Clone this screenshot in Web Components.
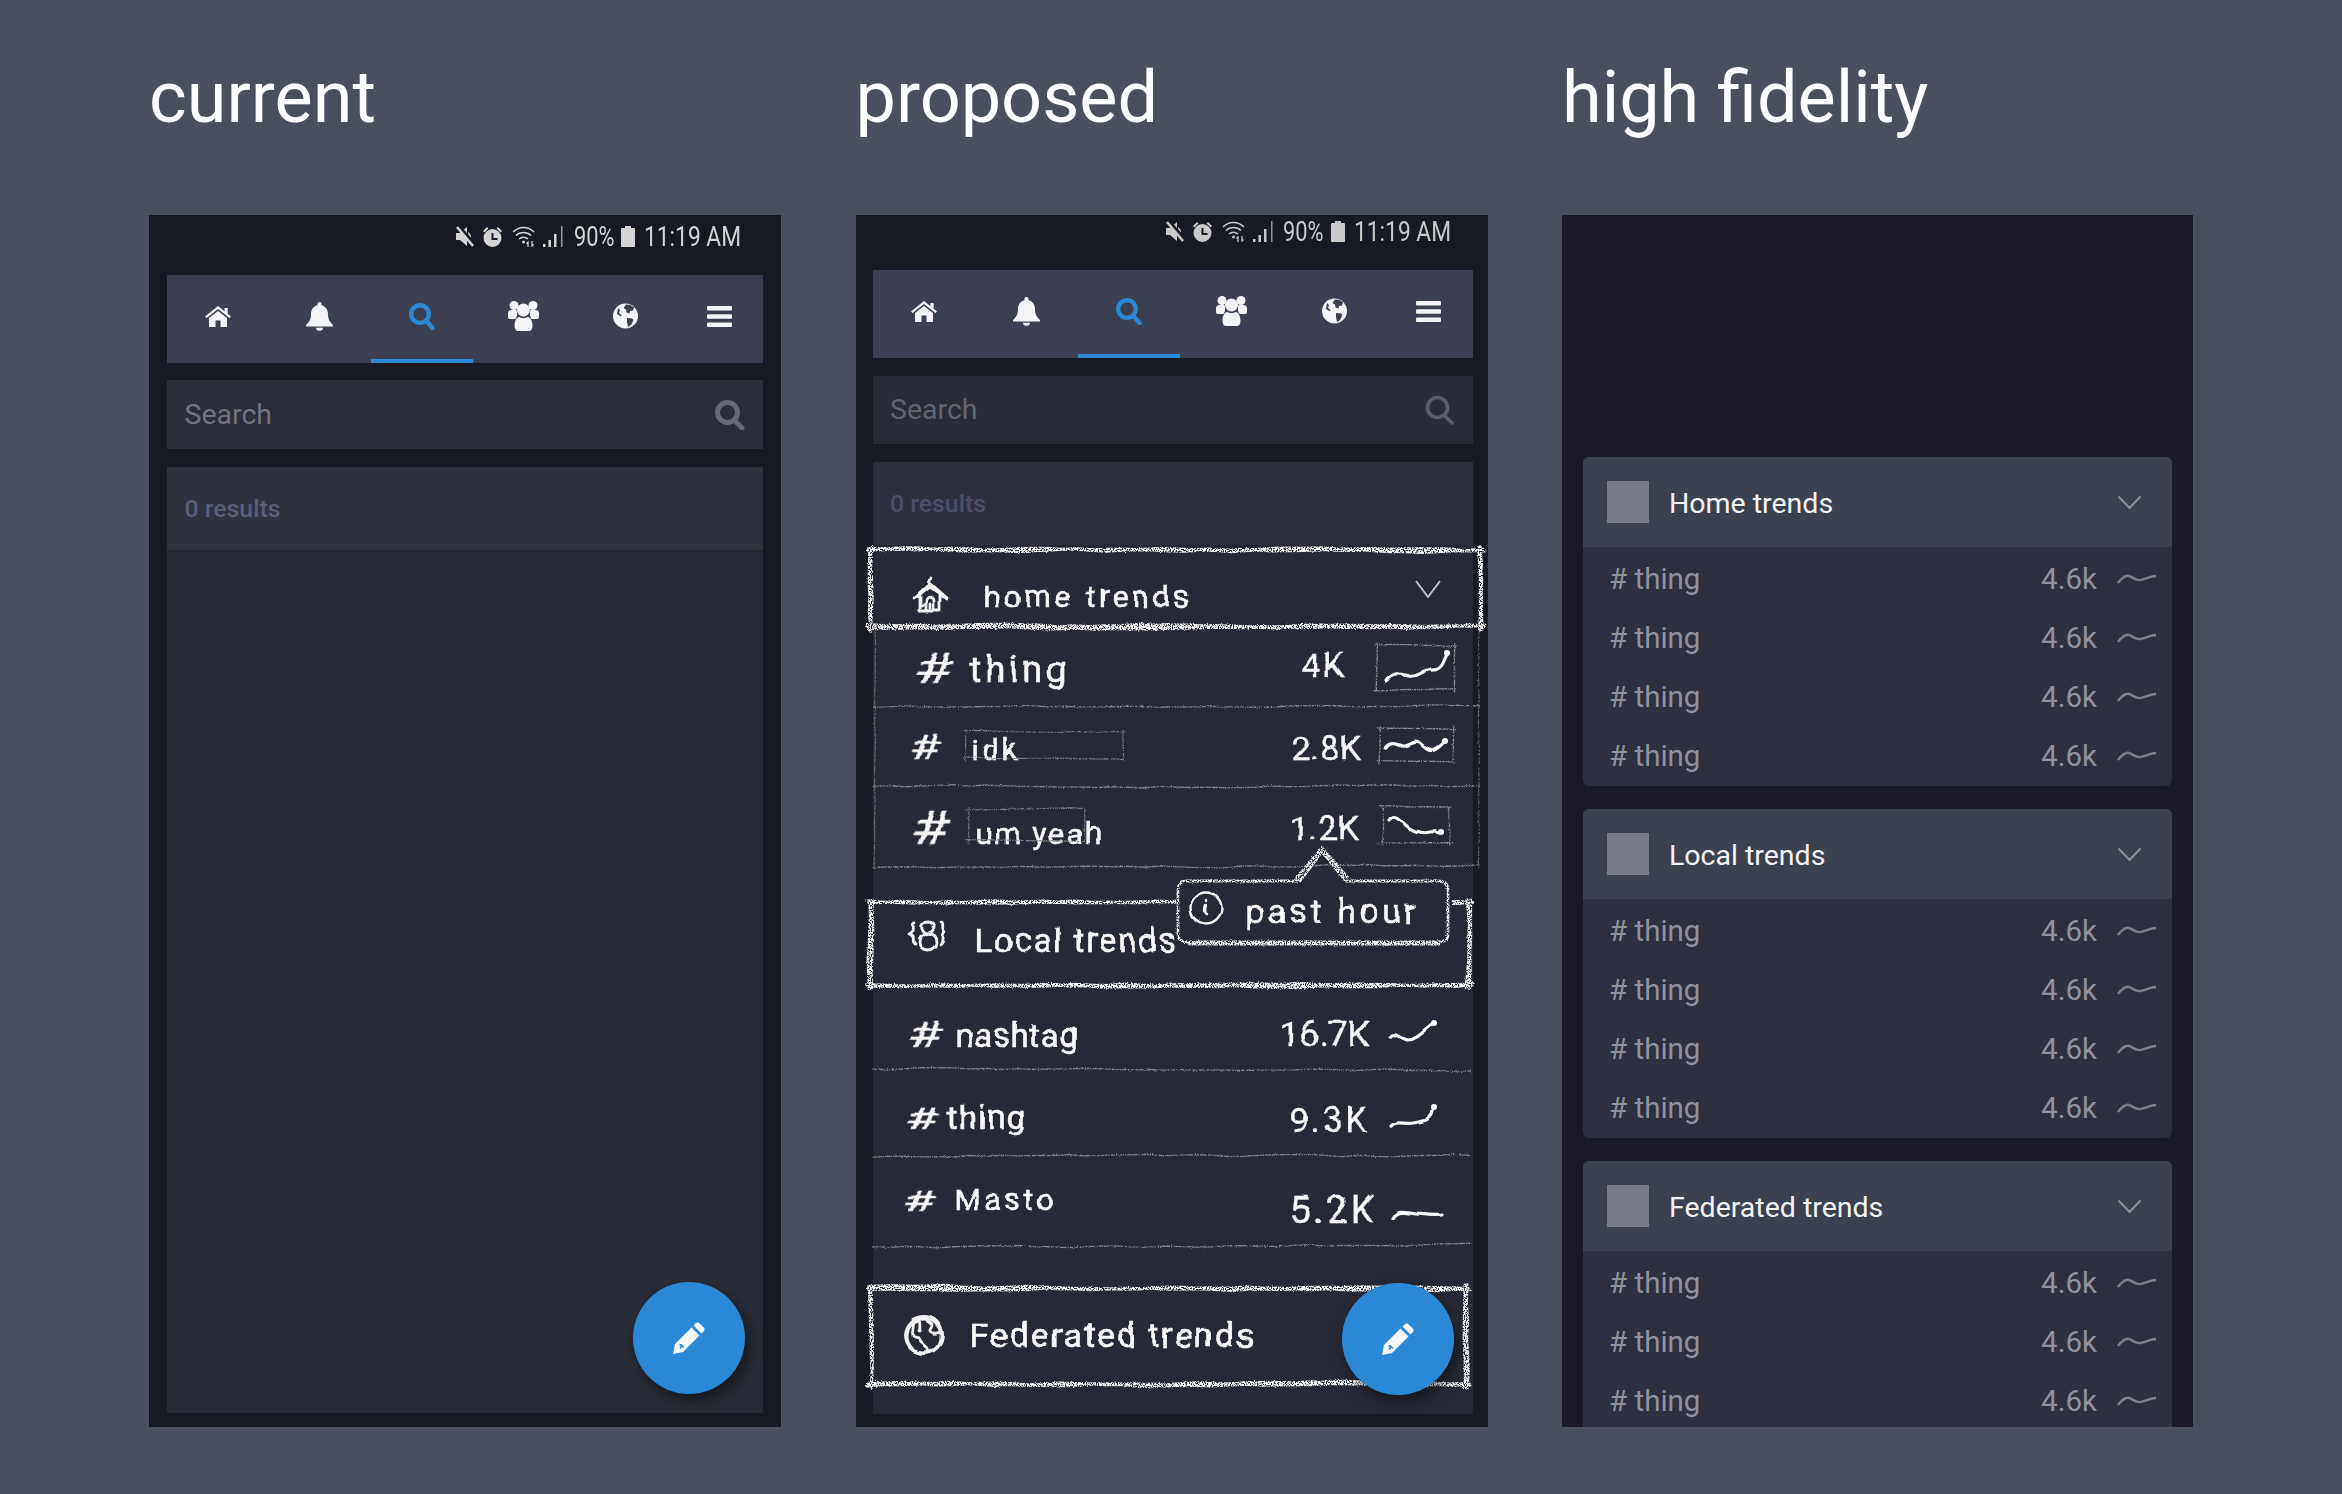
<!DOCTYPE html>
<html lang="en">
<head>
<meta charset="utf-8">
<title>Trends mockup</title>
<style>
html,body{margin:0;padding:0;background:#4a4f5e;}
html{height:1494px;overflow:hidden;}
body{width:2342px;height:1494px;overflow:hidden;font-family:Roboto,"Liberation Sans",sans-serif;}
.board{display:grid;grid-template-columns:632px 632px 631px;column-gap:74.5px;padding-left:149px;}
</style>
</head>
<body>
<div class="board">
  <mock-column heading="current">
    <app-phone style="--bg:#171a22;--pl:18px;--pr:18px;--sh:60px;--pb:14px;--sg:17px">
      <status-bar style="--stp:7px;--ibg:#171a22"></status-bar>
      <nav-bar></nav-bar>
      <search-box style="--box:#2b2d39;--txt:#72757f;--ico:#666a75;--sw:5;--h:69px"></search-box>
      <result-panel style="--head:#2f313d;--body:#292b36;--count:#5a5e79;--hh:85px"></result-panel>
      <fab-button style="--fr:36px;--fb:33px"></fab-button>
    </app-phone>
  </mock-column>

  <mock-column heading="proposed">
    <app-phone style="--bg:#181a24;--pl:17px;--pr:15px;--sh:55px;--pb:13px;--sg:18px">
      <status-bar style="--st:#c9c9c9;--stp:2px;--ibg:#181a24"></status-bar>
      <nav-bar></nav-bar>
      <search-box style="--box:#292b37;--txt:#62656f;--ico:#5a5d68;--sw:3.6;--h:68px"></search-box>
      <result-panel style="--head:#2d2f3d;--body:#272a36;--count:#4a4e69;--hh:85px">
        <sketch-head label="home trends" icon="home" chevron w="615" h="83" tx="115" tw="209" ty="8" fs="30" ix="44" seed="11"></sketch-head>
        <sketch-row h="78" hx="46" hw="38" hs="42" tx="101" vx="433" sx="507" tag="thing" tw="101" ts="36" val="4K" vw="45" vs="33" spark="0" sides rule seed="21" dy="0" tdy="1" sdy="-3" vdy="-3"></sketch-row>
        <sketch-row h="79" hx="41" hw="30" hs="35" tx="103" vx="423" sx="509" tag="idk" tw="48" ts="30" val="2.8K" vw="70" vs="34" spark="1" sides rule seed="31" dy="0" tdy="2" sdy="-3" vdy="0" faint="97,24,156,26"></sketch-row>
        <sketch-row h="81" hx="43" hw="38" hs="46" tx="107" vx="421" sx="512" tag="um yeah" tw="128" ts="30" val="1.2K" vw="70" vs="34" spark="2" sides rule seed="41" dy="0" tdy="6" sdy="-3" vdy="0" faint="99,23,115,30"></sketch-row>
        <sketch-head label="Local trends" icon="local" w="603" h="88" tx="106" tw="203" ty="-3" fs="33" ix="38" seed="51" mt="32" tooltip></sketch-head>
        <sketch-row h="82" hx="39" hw="34" hs="36" tx="87" vx="411" sx="521" tag="nashtag" tw="123" ts="33" val="16.7K" vw="90" vs="35" spark="3" rule seed="61" dy="6" tdy="7" sdy="2" vdy="6" ruletone="1"></sketch-row>
        <sketch-row h="87" hx="37" hw="32" hs="32" tx="78" vx="421" sx="522" tag="thing" tw="80" ts="34" val="9.3K" vw="80" vs="35" spark="4" rule seed="71" dy="4" tdy="3" sdy="2" vdy="7" ruletone="1"></sketch-row>
        <sketch-row h="91" hx="34" hw="32" hs="30" tx="86" vx="421" sx="524" tag="Masto" tw="103" ts="30" val="5.2K" vw="88" vs="38" spark="5" rule seed="81" dy="-2" tdy="-3" sdy="11" vdy="7" ruletone="1"></sketch-row>
        <sketch-head label="Federated trends" icon="globe" w="600" h="102" tx="101" tw="286" ty="-1" fs="34" ix="35" seed="91" mt="37"></sketch-head>
      </result-panel>
      <fab-button style="--fr:34px;--fb:32px"></fab-button>
    </app-phone>
  </mock-column>

  <mock-column heading="high fidelity">
    <app-phone style="--bg:#1a1b26;--pl:21px;--pr:21px;--sh:242px;--pb:0px">
      <trend-card>Home trends
        <trend-row slot="rows"></trend-row><trend-row slot="rows"></trend-row><trend-row slot="rows"></trend-row><trend-row slot="rows"></trend-row>
      </trend-card>
      <trend-card>Local trends
        <trend-row slot="rows"></trend-row><trend-row slot="rows"></trend-row><trend-row slot="rows"></trend-row><trend-row slot="rows"></trend-row>
      </trend-card>
      <trend-card>Federated trends
        <trend-row slot="rows"></trend-row><trend-row slot="rows"></trend-row><trend-row slot="rows"></trend-row>
      </trend-card>
    </app-phone>
  </mock-column>
</div>

<script>
const HAND_FONT = 'Roboto,"Liberation Sans",sans-serif';
const DEFS = `<svg width="0" height="0" style="position:absolute" aria-hidden="true"><defs>
<filter id="ink" x="-10%" y="-25%" width="120%" height="150%" color-interpolation-filters="sRGB">
  <feTurbulence type="fractalNoise" baseFrequency="0.045" numOctaves="2" seed="7" result="n"/>
  <feDisplacementMap in="SourceGraphic" in2="n" scale="5" xChannelSelector="R" yChannelSelector="G"/>
  <feGaussianBlur stdDeviation="0.35"/>
</filter>
<filter id="chalk" filterUnits="userSpaceOnUse" x="-40" y="-90" width="760" height="320" color-interpolation-filters="sRGB">
  <feTurbulence type="fractalNoise" baseFrequency="0.85" numOctaves="2" seed="3" result="n"/>
  <feDisplacementMap in="SourceGraphic" in2="n" scale="2.4" xChannelSelector="R" yChannelSelector="G" result="d"/>
  <feColorMatrix in="n" type="matrix" values="0 0 0 0 1  0 0 0 0 1  0 0 0 0 1  7 0 0 0 -2.5" result="g"/>
  <feComposite in="d" in2="g" operator="in"/>
</filter>
</defs></svg>`;

function rng(seed){let s=seed*7919%2147483647;return()=>(s=s*16807%2147483647)/2147483647;}
function rough(r,x1,y1,x2,y2,j,step){
  step=step||16;
  const dx=x2-x1,dy=y2-y1,L=Math.hypot(dx,dy)||1,n=Math.max(2,Math.round(L/step));
  const nx=-dy/L,ny=dx/L;let off=(r()-.5)*j,d='M'+(x1+nx*off).toFixed(1)+' '+(y1+ny*off).toFixed(1);
  for(let i=1;i<=n;i++){
    off=off*.6+(r()-.5)*j;
    const t=i/n;d+=' L'+(x1+dx*t+nx*off).toFixed(1)+' '+(y1+dy*t+ny*off).toFixed(1);
  }
  return d;
}
function roughBox(r,x,y,w,h,p,j){
  let d='';
  for(let i=0;i<p;i++){
    const e=()=>(r()-.5)*3;
    d+=rough(r,x-3+e(),y+e(),x+w+3+e(),y+e(),j)+' ';
    d+=rough(r,x+w+e(),y-2+e(),x+w+e(),y+h+3+e(),j)+' ';
    d+=rough(r,x+w+3+e(),y+h+e(),x-3+e(),y+h+e(),j)+' ';
    d+=rough(r,x+e(),y+h+3+e(),x+e(),y-2+e(),j)+' ';
  }
  return d;
}
function fit(el,target){
  const w=el.getBoundingClientRect().width,n=el.textContent.length;
  if(w>0&&target)el.style.letterSpacing=((target-w)/n).toFixed(2)+'px';
}

class Base extends HTMLElement{
  constructor(){super();this.attachShadow({mode:'open'});}
  a(n,d){const v=this.getAttribute(n);return v===null?d:v;}
  n(n,d){const v=this.getAttribute(n);return v===null?d:parseFloat(v);}
}

class MockColumn extends Base{
  connectedCallback(){
    this.shadowRoot.innerHTML=`<style>
      :host{display:flex;flex-direction:column;width:100%;}
      h1{margin:0;height:215px;box-sizing:border-box;padding-top:56px;font:400 72px/84px Roboto,sans-serif;color:#fff;white-space:nowrap;}
    </style><h1>${this.a('heading','')}</h1><slot></slot>`;
  }
}

class AppPhone extends Base{
  connectedCallback(){
    this.shadowRoot.innerHTML=`<style>
      :host{display:block;position:relative;height:1212px;overflow:hidden;background:var(--bg);}
      .in{height:100%;box-sizing:border-box;display:flex;flex-direction:column;padding:0 var(--pr) var(--pb) var(--pl);}
      .sp{flex:none;height:var(--sh);}
      ::slotted(search-box){margin-top:var(--sg);}
      ::slotted(result-panel){margin-top:18px;}
      ::slotted(trend-card){margin-bottom:23px;}
    </style><div class="in"><div class="sp"></div><slot></slot></div>`;
    const s=this.querySelector('status-bar');
    if(s){this.shadowRoot.querySelector('.sp').remove();}
  }
}

class StatusBar extends Base{
  connectedCallback(){
    const c='var(--st,#d4d4d4)';
    this.shadowRoot.innerHTML=`<style>
      :host{display:flex;flex:none;height:var(--sh);justify-content:flex-end;color:${c};font:400 27px/30px Roboto,sans-serif;box-sizing:border-box;padding:var(--stp) 22px 0 0;}
      .r{display:flex;align-items:flex-start;height:30px}
      svg{display:block;flex:none;fill:${c};stroke:none;margin-top:4px;}
      .w{display:inline-block;flex:none;white-space:nowrap;transform-origin:left center;}
    </style><div class="r">
      <svg width="21" height="21" viewBox="0 0 21 21" style="margin-right:7px"><path d="M2 7h4l7-6v19l-7-6H2z"/><path d="M14 6c2 1 3 3 3 5s-1 3-2 4z"/><path d="M4 0L21 19" stroke="var(--ibg)" stroke-width="4"/><path d="M3 1l16 19" stroke="${c}" stroke-width="2.600"/></svg>
      <svg width="21" height="22" viewBox="0 0 21 22" style="margin-right:9px"><path fill-rule="evenodd" d="M10.500 3a9 9 0 1 1 0 18 9 9 0 0 1 0-18zM9.500 7v7h6v-2h-4V7z"/><path d="M1 5l4-4 1.400 1.400-4 4zM20 5l-4-4-1.400 1.400 4 4z"/></svg>
      <svg width="23" height="21" viewBox="0 0 23 21" style="margin-right:8px"><g fill="none" stroke="${c}" stroke-width="1.500"><path d="M1 6c6-6 15-6 21 0M4 9.500c4-4 11-4 15 0M7 13c2.500-2.500 6.500-2.500 9 0"/></g><circle cx="11.500" cy="16" r="1.500"/><path d="M16 21v-5l-1.500 1.500M20 15v5l1.500-1.500" stroke="${c}" stroke-width="1.300" fill="none"/></svg>
      <svg width="21" height="21" viewBox="0 0 21 21" style="margin-right:9.500px"><rect x="0" y="18" width="2.500" height="3"/><rect x="5.500" y="14" width="2.500" height="7"/><rect x="11" y="8" width="2.500" height="13"/><rect x="18" y="0" width="1.500" height="21" opacity=".7"/></svg>
      <span class="w" data-w="40.500">90%</span>
      <svg width="14" height="21" viewBox="0 0 14 21" style="margin:4px 9px 0 7px"><path d="M4 0h6v2h3a1 1 0 0 1 1 1v17a1 1 0 0 1-1 1H1a1 1 0 0 1-1-1V3a1 1 0 0 1 1-1h3z"/></svg>
      <span class="w" data-w="97">11:19 AM</span>
    </div>`;
    this.shadowRoot.querySelectorAll('.w').forEach(el=>{
      const target=parseFloat(el.dataset.w),w=el.getBoundingClientRect().width;
      el.style.width=target+'px';
      if(w>0)el.style.transform=`scaleX(${(target/w).toFixed(3)})`;
    });
  }
}

class NavBar extends Base{
  connectedCallback(){
    const w='#f4f4f6';
    const tabs=[
      `<svg width="26" height="21" viewBox="0 0 26 21"><path d="M13 0l6.500 5.200V2h3.200v5.800L26 10.500 24.500 12 13 3 1.500 12 0 10.500z"/><path d="M13 5l9 7v9h-6.500v-6.500h-5V21H4v-9z"/></svg>`,
      `<svg width="27" height="29" viewBox="0 0 27 29"><path d="M13.500 0c1.300 0 2 .9 2 2v1.200C20 4.200 22 8 22 12c0 6 2 8 5 11v1.500H0V23c3-3 5-5 5-11 0-4 2-7.800 6.500-8.800V2c0-1.100.7-2 2-2zM10 25.800h7a3.500 3 0 0 1-7 0z"/></svg>`,
      `<svg width="26" height="27" viewBox="0 0 26 27" style="fill:none;stroke:#2b88d4;stroke-width:4.400;stroke-linecap:round"><circle cx="11" cy="11" r="8.800"/><path d="M18 18.500l5.500 6.500"/></svg>`,
      `<svg width="31" height="30" viewBox="0 0 31 30"><circle cx="6" cy="4.500" r="4.500"/><circle cx="25" cy="4.500" r="4.500"/><path d="M0 12c0-2 2-3 3.500-3h5c1 3 1 6-1 9H2c-1.500 0-2-1-2-2zM31 12c0-2-2-3-3.500-3h-5c-1 3-1 6 1 9H29c1.500 0 2-1 2-2z"/><circle cx="15.500" cy="9" r="6.500"/><path d="M6.500 25c0-5 2-9 5-9 2 1.500 6 1.500 8 0 3 0 5 4 5 9 0 3-1.500 5-3.500 5H10c-2 0-3.500-2-3.500-5z"/></svg>`,
      `<svg width="25" height="26" viewBox="0 0 25 26"><circle cx="12.500" cy="13" r="12.500"/><path fill="#3b3f50" d="M13 1.500c3-.3 6 1 8 3l-1 3-3 .5-.5 2.500-3-1-.5-3-2.500-1.500zM14 15l5 .5 1.500 1.500-2.500 5-3 2-1-5zM5 5l2 2-1 3 2.500 2-.5 1.500L4 11z"/></svg>`,
      `<svg width="25" height="21" viewBox="0 0 25 21"><rect width="25" height="4.600" rx="1"/><rect y="8.200" width="25" height="4.600" rx="1"/><rect y="16.400" width="25" height="4.600" rx="1"/></svg>`
    ];
    this.shadowRoot.innerHTML=`<style>
      :host{display:grid;flex:none;grid-template-columns:repeat(5,17.1%) 1fr;height:88px;background:#3b3f50;}
      .t{display:flex;align-items:center;justify-content:center;padding-bottom:6px;box-sizing:border-box;height:88px;}
      .on{border-bottom:4px solid #2b88d4;padding-bottom:2px;}
      svg{display:block;fill:${w};}
    </style>${tabs.map((t,i)=>`<div class="t${i==2?' on':''}">${t}</div>`).join('')}`;
  }
}

class SearchBox extends Base{
  connectedCallback(){
    this.shadowRoot.innerHTML=`<style>
      :host{display:flex;flex:none;align-items:center;justify-content:space-between;height:var(--h);background:var(--box);padding:0 18px 0 17.500px;box-sizing:border-box;color:var(--txt);font:400 28.500px/34px Roboto,sans-serif;}
      svg{display:block;fill:none;stroke:var(--ico);stroke-width:var(--sw);stroke-linecap:round}
    </style><span>Search</span>
    <svg width="30" height="30" viewBox="0 0 30 30"><circle cx="12.500" cy="12.500" r="10"/><path d="M20 21l7 7"/></svg>`;
  }
}

class ResultPanel extends Base{
  connectedCallback(){
    this.shadowRoot.innerHTML=`<style>
      :host{display:flex;flex-direction:column;flex:1;min-height:0;background:var(--body);}
      .h{flex:none;height:var(--hh);display:flex;align-items:center;padding-left:17.500px;background:var(--head);border-bottom:2px solid #24262f;box-sizing:border-box;color:var(--count);font:500 24.800px/30px Roboto,sans-serif;}
      .s{margin-left:-4px;}
    </style><div class="h">0 results</div><div class="s"><slot></slot></div>`;
  }
}

class FabButton extends Base{
  connectedCallback(){
    this.shadowRoot.innerHTML=`<style>
      :host{position:absolute;right:var(--fr);bottom:var(--fb);width:112px;height:112px;border-radius:50%;background:#2b88d6;box-shadow:4px 6px 14px rgba(0,0,0,.45);display:flex;align-items:center;justify-content:center;}
      svg{display:block;fill:#f6f8fb}
    </style><svg width="32" height="32" viewBox="0 0 32 32"><path d="M22.500 1.500a3 3 0 0 1 4.200 0l3.800 3.800a3 3 0 0 1 0 4.200l-2 2-8-8z"/><path fill-rule="evenodd" d="M18.500 5.500l8 8L10 30 0 32l2-10zM7 22l-1 1 1.500 1-1 2 1.500 1 1-2 1.500 1 1-1-3-3z"/></svg>`;
  }
}

const HAND_ICONS={
  home:`<path d="M17 6L1 21M17 6l17 15M7 17v17h20V17M5 19l12-10 13 10M13 34V24c0-5 8-5 8 0v10M17 27v7M18 1l-3 9M9 29l3-2"/>`,
  local:`<path d="M21 1c-5 0-7 3-6 6 1 3 3 5 6 5s5-2 6-5c1-3-1-6-6-6zM21 12c-7 1-9 5-9 9s3 8 9 8 9-4 9-8-2-8-9-9zM8 2c-3 0-1 5-2 7s-4 3-4 3 3 1 4 3-1 6 2 8M34 2c3 0 1 5 2 7s2 3 2 3-2 1-2 3 1 5-2 8"/>`,
  globe:`<circle cx="20" cy="20" r="18.500"/><circle cx="20" cy="21" r="17"/><path d="M9 6c2 6-2 10 0 15 3 3 6 0 7 4 2 4 7 4 9 12M16 3c-1 5 1 10-1 13M26 3c-4 3 0 5 2 7 1 2-3 4-2 6 3 4 8 2 11 1"/>`
};

class SketchHead extends Base{
  connectedCallback(){
    const w=this.n('w',600),h=this.n('h',80),r=rng(this.n('seed',1));
    const ix=this.n('ix',40),tx=this.n('tx',100),fs=this.n('fs',30),ty=this.n('ty',0),mt=this.n('mt',0);
    const icon=this.a('icon','home');
    const tip=this.hasAttribute('tooltip');
    const chev=this.hasAttribute('chevron');
    this.shadowRoot.innerHTML=`${DEFS}<style>
      :host{display:block;position:relative;height:${h}px;width:${w}px;margin-top:${mt}px;}
      .row{display:flex;align-items:center;height:100%;padding-left:${ix}px;box-sizing:border-box;color:#f6f6f6;}
      .ic{display:block;flex:none;width:${tx-ix}px;height:40px;margin-top:${ty*2}px;overflow:visible;}
      .ic g{fill:none;stroke:#f2f2f2;stroke-width:2.800;stroke-linecap:round;stroke-linejoin:round;}
      .lab{display:inline-block;white-space:nowrap;font:400 ${fs}px/40px ${HAND_FONT};-webkit-text-stroke:.55px #fff;margin-top:${ty*2}px;filter:url(#ink);}
      svg.ov{position:absolute;left:0;top:0;overflow:visible;pointer-events:none;}
      .chev{position:absolute;left:546px;top:33px;overflow:visible}
      .tip{position:absolute;left:307px;top:-22px;width:276px;height:67px;background:#272a36;border-radius:8px;color:#f6f6f6;display:flex;align-items:center;box-sizing:border-box;padding-left:70px;}
      .tip .t{display:inline-block;white-space:nowrap;font:400 33px/40px ${HAND_FONT};-webkit-text-stroke:.55px #fff;filter:url(#ink);}
      .tip svg{position:absolute;left:0;top:0;overflow:visible}
    </style>
    <div class="row">
      <svg class="ic" viewBox="0 0 ${tx-ix} 40"><g filter="url(#ink)">${HAND_ICONS[icon]}</g></svg>
      <span class="lab">${this.a('label','')}</span>
    </div>
    <svg class="ov" width="${w}" height="${h}"><g filter="url(#chalk)" fill="none" stroke="#f1f1f1" stroke-width="2.900" stroke-linecap="round">
      <path d="${roughBox(r,2,3,w-5,h-6,3,2.400)}"/></g></svg>
    ${chev?`<svg class="chev" width="26" height="18" viewBox="0 0 26 18"><path d="M1 1l12 16L25 1" fill="none" stroke="#c8c9cd" stroke-width="1.800"/></svg>`:''}
    ${tip?`<div class="tip"><svg width="276" height="67"><g filter="url(#chalk)" fill="none" stroke="#ececec" stroke-width="2.800" stroke-linejoin="round">
        <path d="M10 3H124L146 -26 170 3H262Q272 3 272 12V56Q272 64 262 64H12Q2 64 2 56V12Q2 3 10 3Z"/>
        <path d="M120 1 L146 -30 172 0M12 66H264"/></g>
        <g filter="url(#ink)" fill="none" stroke="#f4f4f4" stroke-width="2.400" stroke-linecap="round"><circle cx="30" cy="30" r="15.500"/><path d="M30 26c-1 5-2 9 1 10M30 21v1"/></g></svg>
      <span class="t">past hour</span></div>`:''}`;
    fit(this.shadowRoot.querySelector('.lab'),this.n('tw',200));
    if(tip)fit(this.shadowRoot.querySelector('.t'),174);
  }
}

const SPARKS=[
  {w:79,h:47,box:1,d:'M11 37C18 28 26 31 33 33S47 26 54 27 66 24 68 18L71 11',dot:[71,10]},
  {w:76,h:35,box:1,d:'M7 21C13 12 20 20 27 19S37 11 45 19 58 24 67 14',dot:[67,14]},
  {w:69,h:38,box:1,d:'M8 14C15 5 20 16 27 21S41 28 49 26 55 29 61 26',dot:[60,26]},
  {w:46,h:24,box:0,d:'M0 18C5 11 10 21 18 21S33 13 43 5',dot:[44,4]},
  {w:46,h:26,box:0,d:'M0 23C6 17 12 22 22 20S37 18 41 12L43 5',dot:[43,4]},
  {w:50,h:12,box:0,d:'M0 10C6 1 14 5 24 6S40 8 50 7',dot:null}
];

class SketchRow extends Base{
  connectedCallback(){
    const h=this.n('h',80),r=rng(this.n('seed',1)),W=615;
    const hx=this.n('hx',40),tx=this.n('tx',100),vx=this.n('vx',420),sx=this.n('sx',510);
    const dy=this.n('dy',0),tdy=this.n('tdy',0),vdy=this.n('vdy',0),sdy=this.n('sdy',0);
    const sp=SPARKS[this.n('spark',0)];
    const sides=this.hasAttribute('sides');
    const tone=this.hasAttribute('ruletone');
    let faint='';
    const fa=this.a('faint',null);
    if(fa){const[x,y,fw,fh]=fa.split(',').map(Number);faint=`<path d="${roughBox(r,x,y,fw,fh,1,1.200)}" stroke-width="1.100"/>`;}
    const rule=rough(r,4,h-1,610-(tone?8:0),h-1+(r()-.5)*4,2.200);
    const side=sides?rough(r,6,0,6,h,1.200)+' '+rough(r,610,0,610,h,1.200):'';
    this.shadowRoot.innerHTML=`${DEFS}<style>
      :host{display:block;position:relative;height:${h}px;width:${W}px;}
      .row{display:flex;align-items:center;height:100%;padding-left:${hx}px;box-sizing:border-box;color:#f6f6f6;}
      span{display:inline-block;white-space:nowrap;}
      .c{flex:none;}
      .hash{font:400 ${this.n('hs',40)}px/40px ${HAND_FONT};-webkit-text-stroke:.3px #fff;transform-origin:left center;filter:url(#ink);}
      .tag{font:400 ${this.n('ts',32)}px/40px ${HAND_FONT};-webkit-text-stroke:.55px #fff;filter:url(#ink);}
      .val{font:400 ${this.n('vs',32)}px/40px ${HAND_FONT};-webkit-text-stroke:.3px #fff;filter:url(#ink);}
      .sp{display:block;overflow:visible;flex:none;margin-top:${sdy*2}px;}
      .ov{position:absolute;left:0;top:0;overflow:visible;pointer-events:none;}
    </style>
    <div class="row">
      <div class="c" style="width:${tx-hx}px;margin-top:${dy*2}px"><span class="hash">#</span></div>
      <div class="c" style="width:${vx-tx}px;margin-top:${tdy*2}px"><span class="tag">${this.a('tag','')}</span></div>
      <div class="c" style="width:${sx-vx}px;margin-top:${vdy*2}px"><span class="val">${this.a('val','')}</span></div>
      <svg class="sp" width="${sp.w}" height="${sp.h}" viewBox="0 0 ${sp.w} ${sp.h}">
        ${sp.box?`<g filter="url(#chalk)" fill="none" stroke="#8d8f96" stroke-width="1.400"><path d="${roughBox(r,1,1,sp.w-2,sp.h-2,1,1.400)}"/></g>`:''}
        <path d="${sp.d}" fill="none" stroke="#fafafa" stroke-width="3.200" stroke-linecap="round" filter="url(#ink)"/>
        ${sp.dot?`<circle cx="${sp.dot[0]}" cy="${sp.dot[1]}" r="3" fill="#fff"/>`:''}
      </svg>
    </div>
    <svg class="ov" width="${W}" height="${h}"><g filter="url(#chalk)" fill="none" stroke="#85878f" stroke-width="1.400" stroke-linecap="round">
      ${faint}<path d="${rule}"/><path d="${side}" stroke-width="1.100" opacity=".8"/></g></svg>`;
    const hash=this.shadowRoot.querySelector('.hash');
    const hw=this.n('hw',30),mw=hash.getBoundingClientRect().width;
    fit(this.shadowRoot.querySelector('.tag'),this.n('tw',100));
    fit(this.shadowRoot.querySelector('.val'),this.n('vw',60));
    if(mw>0)hash.style.transform=`skewX(-6deg) scaleX(${(hw/mw).toFixed(2)})`;
  }
}

class TrendCard extends Base{
  connectedCallback(){
    this.shadowRoot.innerHTML=`<style>
      :host{display:block;flex:none;border-radius:6px;overflow:hidden;background:#2e3040;}
      .h{display:flex;align-items:center;height:90px;background:#3c4150;padding:0 30px 0 24px;color:#f4f4f6;font:400 28.500px/34px Roboto,sans-serif;}
      .sq{width:42px;height:42px;background:#797c86;margin-right:20px;flex:none;}
      .ti{flex:1;margin-top:4px;}
      svg{display:block;margin-top:1px;}
      .b{padding:2px 0 0;height:239px;box-sizing:border-box;}
    </style><div class="h"><div class="sq"></div><div class="ti"><slot></slot></div>
      <svg width="25" height="15" viewBox="0 0 25 15"><path d="M1.500 1.500L12.500 13 23.500 1.500" fill="none" stroke="#8b8e98" stroke-width="2.200"/></svg>
    </div><div class="b"><slot name="rows"></slot></div>`;
  }
}

class TrendRow extends Base{
  connectedCallback(){
    this.shadowRoot.innerHTML=`<style>
      :host{display:flex;align-items:center;height:59px;padding:0 15px 0 26px;color:#90929c;font:400 29.500px/34px Roboto,sans-serif;}
      .t{flex:1;}
      svg{display:block;margin-left:20px;margin-top:-2px;}
    </style><span class="t"># thing</span><span>4.6k</span>
    <svg width="40" height="12" viewBox="0 0 40 12"><path d="M1 11C5 6 8 3 12 4S18 9 24 8 33 4 39 4" fill="none" stroke="#7e808a" stroke-width="2.400"/></svg>`;
  }
}

[['mock-column',MockColumn],['app-phone',AppPhone],['status-bar',StatusBar],['nav-bar',NavBar],['search-box',SearchBox],['result-panel',ResultPanel],['fab-button',FabButton],['sketch-head',SketchHead],['sketch-row',SketchRow],['trend-card',TrendCard],['trend-row',TrendRow]].forEach(([n,c])=>customElements.define(n,c));
</script>
</body>
</html>
